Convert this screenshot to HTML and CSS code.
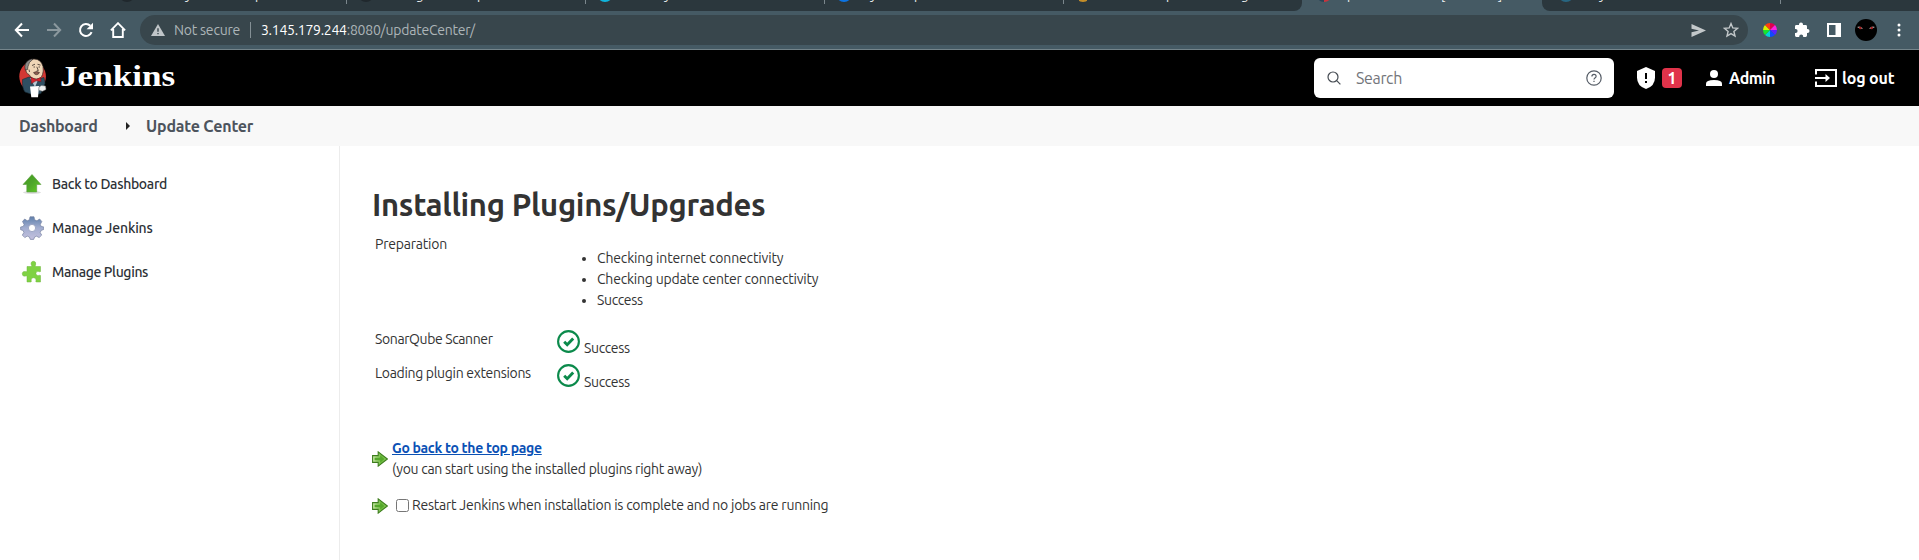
FILE: index.html
```
<!DOCTYPE html>
<html lang="en">
<head>
<meta charset="utf-8">
<title>Update Center [Jenkins]</title>
<link rel="stylesheet" href="styles.css">
</head>
<body>
<svg width="0" height="0" class="defs">
  <defs>
    <linearGradient id="green" x1="0" y1="0" x2="1" y2="1"><stop offset="0" stop-color="#3f9a1c"/><stop offset=".5" stop-color="#4ea62a"/><stop offset="1" stop-color="#62cf22"/></linearGradient>
    <linearGradient id="steel" x1="0" y1="0" x2="0" y2="1"><stop offset="0" stop-color="#5f80ac"/><stop offset=".5" stop-color="#a3aed0"/><stop offset="1" stop-color="#c3c0de"/></linearGradient>
    <linearGradient id="lime" x1="0" y1="0" x2="1" y2="0"><stop offset="0" stop-color="#d2ecb0"/><stop offset=".6" stop-color="#6cbc3c"/><stop offset="1" stop-color="#8fcb62"/></linearGradient>
    <symbol id="check" viewBox="0 0 23 23"><circle cx="11.5" cy="11.5" r="10.4" fill="none" stroke="#0b8a4b" stroke-width="2.1"/><path d="M7.2 11.7l3 3 6-6.3" fill="none" stroke="#0b8a4b" stroke-width="2.9"/></symbol>
    <symbol id="arrow" viewBox="0 0 16 16"><path d="M.6 4.6h5.6V.9L15.3 8l-9.1 7.1v-3.7H.6z" fill="url(#lime)" stroke="#3c7d1c" stroke-width="1.1"/><path d="M2.6 6.8h5.6V4.6L12.4 8l-4.2 3.4V9.300H2.6z" fill="#55a82b"/></symbol>
  </defs>
</svg>

<div class="tabstrip">
  <div class="tabs tabs-before">
    <div class="tab"><i class="fav dark"></i><b class="t1">y</b><b class="t2">p</b></div>
    <div class="tab"><i class="fav dark"></i><b class="t3">g</b><b class="t4">p</b></div>
    <div class="tab"><i class="fav cyan"></i><b class="t5">y</b></div>
    <div class="tab"><i class="fav blue"></i><b class="t6">y</b><b class="t7">p</b></div>
    <div class="tab last"><i class="fav amber"></i><b class="t8">p</b><b class="t9">g</b></div>
  </div>
  <div class="tab active"><i class="fav red"></i><b class="t10">p</b><b class="t11">[</b><b class="t12">]</b></div>
  <div class="tabs tabs-after"><div class="tab"><i class="fav teal"></i><b class="t13">y</b></div></div>
</div>

<div class="toolbar">
  <div class="nav">
    <svg width="16" height="16" viewBox="0 0 16 16" fill="none" stroke="#fff" stroke-width="2"><path d="M15 8H2M8 1.500L1.800 8 8 14.500"/></svg>
    <svg width="16" height="16" viewBox="0 0 16 16" fill="none" stroke="#8b989e" stroke-width="2"><path d="M1 8h13M8 1.500L14.200 8 8 14.500"/></svg>
    <svg width="16" height="16" viewBox="0 0 16 16"><path d="M13.600 10.200A6 6 0 1 1 12.300 3.800" fill="none" stroke="#fff" stroke-width="2"/><path d="M15 .8v6.400H8.600z" fill="#fff"/></svg>
    <svg width="16" height="16" viewBox="0 0 16 16"><path d="M.9 8.300L8 1.200l7.100 7.100M3.200 7v8h9.600V7" fill="none" stroke="#fff" stroke-width="1.900"/></svg>
  </div>
  <div class="omnibox">
    <svg class="warn" width="14" height="12" viewBox="0 0 14 12"><path d="M7 0l7 12H0z" fill="#c0c5c8"/><path d="M6.300 4.200h1.400v3.600H6.300zM6.300 8.900h1.400v1.400H6.300z" fill="#38464c"/></svg>
    <span class="insecure">Not secure</span>
    <span class="bar"></span>
    <span class="host">3.145.179.244</span><span class="path">:8080/updateCenter/</span>
    <svg class="send" width="15" height="13" viewBox="0 0 15 13"><path d="M.5 0L15 6.500.5 13V8.200L8 6.500.5 4.800z" fill="#c3c8ca"/></svg>
    <svg width="16" height="16" viewBox="0 0 16 16"><path d="M8 1.600l1.800 4.300 4.700.4-3.600 3.100 1.100 4.600L8 11.600 4 14l1.100-4.600-3.600-3.100 4.700-.4z" fill="none" stroke="#c3c8ca" stroke-width="1.400"/></svg>
  </div>
  <div class="ext">
    <svg width="16" height="16" viewBox="-8 -8 16 16">
      <path d="M0 0V-7A7 7 0 0 1 5 -5z" fill="#e0004c"/><path d="M0 0L5-5A7 7 0 0 1 7 0z" fill="#ff20e0"/><path d="M0 0H7A7 7 0 0 1 5 5z" fill="#5b20ff"/><path d="M0 0L5 5A7 7 0 0 1 0 7z" fill="#1048ff"/><path d="M0 0V7A7 7 0 0 1-5 5z" fill="#00d5d8"/><path d="M0 0L-5 5A7 7 0 0 1-7 0z" fill="#19e52c"/><path d="M0 0H-7A7 7 0 0 1-5-5z" fill="#d7f000"/><path d="M0 0L-5-5A7 7 0 0 1 0-7z" fill="#ff3b10"/>
    </svg>
    <svg width="16" height="16" viewBox="0 0 16 16"><path d="M1 4.400Q1 3 2.400 3H5V2.600a2 2 0 0 1 4 0V3h2.600Q13 3 13 4.400V7h.5a2 2 0 0 1 0 4H13v2.600Q13 15 11.600 15H9.200v-.5a2 2 0 0 0-4 0v.5H2.400Q1 15 1 13.600V11h.6a2 2 0 0 0 0-4H1z" fill="#fff"/></svg>
    <svg width="14" height="14" viewBox="0 0 14 14"><path d="M0 0h14v14H0zM2 2v10h6.500V2z" fill="#fff" fill-rule="evenodd"/></svg>
    <svg width="22" height="22" viewBox="0 0 22 22"><circle cx="11" cy="11" r="11"/><path d="M2 8q3-1.500 6 1.500-3 1-6-1.500zM20 8q-3-1.500-6 1.500 3 1 6-1.500z" fill="#a8a0a0"/><circle cx="5.300" cy="9" r="1.200" fill="#a51d1d"/><circle cx="16.700" cy="9" r="1.200" fill="#a51d1d"/></svg>
    <svg width="4" height="14" viewBox="0 0 4 14" fill="#fff"><circle cx="2" cy="2" r="1.500"/><circle cx="2" cy="7" r="1.500"/><circle cx="2" cy="12" r="1.500"/></svg>
  </div>
</div>

<header class="header">
  <svg class="mascot" width="28" height="40" viewBox="0 0 28 40">
    <ellipse cx="13.600" cy="18.500" rx="13.300" ry="15" fill="#d33833"/>
    <path d="M3.500 21.500L10 19l9 2 6-1.500 1 6-2 4-2 6-7 1.500-9-3Q3 30 3.500 21.500z" fill="#2f4f62" stroke="#172b36" stroke-width=".6"/>
    <path d="M11 20l5 9 3.500-8z" fill="#b9c9d4"/>
    <path d="M6.500 9Q8 1 15 1t9 7.500q.8 5-.5 8-1.500 4.500-6 4.500-5 0-7.500-4.500-3.500-1-3.500-7.500z" fill="#f0d6b7" stroke="#382d28" stroke-width=".7"/>
    <path d="M6.300 12Q4.500 5 10 2q2.500-1.300 4-.8Q9.500 4 9 8.500l-.5 3z" fill="#8c8a88" stroke="#292524" stroke-width=".6"/>
    <path d="M13 7.500l3-1.300M18.500 6.300l3 .8M14.500 9h1.500M19.500 9H21M17.800 8.800l1.500 3.700-1.700.5M10 11.500l.5 2.500" fill="none" stroke="#382d28" stroke-width=".8"/>
    <path d="M14.500 14.500q3.500-1.800 6 0-1 2.200-3 2.200t-3-2.200z" fill="#8e5e50" stroke="#2b211d" stroke-width=".5"/>
    <path d="M12 19.300l5 2.300 4.500-2 .6 4-5-.8-4.700 2.800z" fill="#d5222c" stroke="#721219" stroke-width=".5"/>
    <path d="M11 28.500l9-.5-1 11.300h-6.700z" fill="#fff"/>
    <path d="M20 29l2.500-1.500 4 .6.500 3.400-3.500 1.800-3.500-1z" fill="#eee" stroke="#777" stroke-width=".5"/>
  </svg>
  <span class="wordmark">Jenkins</span>
  <div class="search">
    <svg width="14" height="14" viewBox="0 0 14 14" fill="none" stroke="#454b52" stroke-width="1.200"><circle cx="6" cy="6" r="5"/><path d="M9.700 9.700l3.700 3.700"/></svg>
    <span class="placeholder">Search</span>
    <svg width="16" height="16" viewBox="0 0 16 16" fill="none" stroke="#555c66" stroke-width="1.200"><circle cx="8" cy="8" r="7.200"/><path d="M5.900 6.400q0-2.100 2.100-2.100t2.100 1.900q0 1.100-1.100 1.700-1 .6-1 1.700M8 10.700v1.300"/></svg>
  </div>
  <svg class="shield" width="20" height="22" viewBox="0 0 20 22"><path d="M10 0l9 4v6.500q0 8.500-9 11.500-9-3-9-11.500V4z" fill="#fff"/><path d="M9 6h2v6H9zM9 14h2v2H9z"/></svg>
  <span class="badge">1</span>
  <svg class="person" width="16" height="16" viewBox="0 0 16 16" fill="#fff"><circle cx="8" cy="4" r="4"/><path d="M0 16v-2.500Q0 10 8 10t8 3.500V16z"/></svg>
  <span class="user">Admin</span>
  <svg class="exit" width="22" height="18" viewBox="0 0 22 18" fill="none" stroke="#fff" stroke-width="2"><path d="M1 5.500V1h20v16H1v-4.500M0 9h13"/><path d="M10.500 5l4.500 4-4.500 4z" fill="#fff" stroke="none"/></svg>
  <span class="logout">log out</span>
</header>

<nav class="crumbs"><span class="c1">Dashboard</span><svg width="4" height="8" viewBox="0 0 4 8"><path d="M0 0l4 4-4 4z" fill="#222"/></svg><span class="c2">Update Center</span></nav>

<div class="page">
  <aside class="side">
    <a class="task"><svg width="24" height="24" viewBox="0 0 24 24"><ellipse cx="12" cy="20.500" rx="9" ry="1.500" fill="#ddd"/><path d="M12 2.500l9 10h-4.300V20H6.800v-7.500H3z" fill="url(#green)" stroke="#5d9e40" stroke-width=".6"/></svg><span class="k1">Back to Dashboard</span></a>
    <a class="task"><svg width="24" height="24" viewBox="0 0 24 24"><path d="M10 .8h4l.6 3 2.300 1 2.700-1.800 2.200 2.500-1.500 2.900.8 2 2.600.5v2.600l-2.600.9-.9 2.200 1.500 2.500-2.600 2.500-2.500-1.400-2 .8-.9 2.400h-3.400l-.9-2.400-2.200-.9-2.400 1.500-2.500-2.500 1.600-2.500-.8-2.100-2.500-.8v-2.700l2.700-.6.8-2L2.500 5.500 4.700 3l2.500 1.800 2.200-1z" fill="url(#steel)" stroke="#7783a2" stroke-width=".7"/><circle cx="12" cy="12" r="3.600" fill="#fff" stroke="#909bbb" stroke-width=".8"/></svg><span class="k2">Manage Jenkins</span></a>
    <a class="task"><svg width="24" height="24" viewBox="0 0 24 24"><path d="M7 6.500h4.500q.6-.7-.2-1.500Q10.300 1.500 13.500 1.300 16.500 1.500 15.600 5q-.7.800 0 1.500h4.900v5q-.6.700-1.600 0-3-.7-3 2 .2 2.700 3 2 1-.6 1.600 0V22h-4.300q-.8-.6-.2-1.500.4-2.700-2.500-2.800-2.800.1-2.300 2.800.5.900-.2 1.500H7v-5.700q-.7-.8-1.600-.2-3 .7-3.200-2.300.2-2.900 3.200-2.300.9.600 1.600-.2z" fill="#7fd243" stroke="#6fb53c" stroke-width=".5"/></svg><span class="k3">Manage Plugins</span></a>
  </aside>
  <main class="main">
    <h1>Installing Plugins/Upgrades</h1>
    <div class="status">
      <div class="name n1">Preparation</div>
      <ul><li class="l1">Checking internet connectivity</li><li class="l2">Checking update center connectivity</li><li class="ok">Success</li></ul>
      <div class="name n2">SonarQube Scanner</div>
      <div class="result"><svg width="23" height="23"><use href="#check"/></svg><span class="ok">Success</span></div>
      <div class="name n3">Loading plugin extensions</div>
      <div class="result"><svg width="23" height="23"><use href="#check"/></svg><span class="ok">Success</span></div>
    </div>
    <div class="next">
      <svg width="16" height="16"><use href="#arrow"/></svg>
      <div class="nexttext"><a class="top">Go back to the top page</a><div class="note">(you can start using the installed plugins right away)</div></div>
    </div>
    <div class="next restart">
      <svg width="16" height="16"><use href="#arrow"/></svg>
      <input type="checkbox"><label>Restart Jenkins when installation is complete and no jobs are running</label>
    </div>
  </main>
</div>
</body>
</html>
```
FILE: styles.css
```
* { box-sizing: border-box; }
body { margin: 0; height: 560px; overflow: hidden; background: #fff; color: #333; font: 14px/21px Ubuntu, "Noto Sans", sans-serif; white-space: nowrap; }
svg { flex: none; display: block; }
.defs { position: absolute; }

.tabstrip { display: flex; height: 11px; background: #455a64; overflow: hidden; }
.tabs { display: flex; background: #2b373d; }
.tabs-before { width: 1302px; padding-left: 108px; border-radius: 0 0 8px 0; }
.tabs-after { flex: 1; border-radius: 0 0 0 8px; }
.tab { display: flex; width: 239px; height: 4px; padding-left: 11px; border-right: 1px solid #7b878d; overflow: hidden; }
.tab.last, .tab.active { border-right: 0; width: 238px; }
.tab.active { width: 240px; padding-left: 14px; }
.tabs-after .tab { padding-left: 16px; }
.tab b { width: 8px; margin-top: -13px; font-size: 13px; line-height: 16px; font-weight: 400; color: #f1f3f4; }
.fav { width: 16px; height: 16px; margin-top: -14px; border-radius: 50%; }
.dark { background: #20282d; }
.cyan { background: #10b4dc; }
.blue { background: #0c74e4; }
.amber { background: linear-gradient(90deg, transparent 25%, #c48d28 25%, #c48d28 75%, transparent 75%); }
.red { background: linear-gradient(90deg, #294457 50%, #c7343d 50%); }
.teal { background: #286681; }
.tab .t1 { margin-left: 50px; } .tab .t2 { margin-left: 62px; }
.tab .t3 { margin-left: 42px; } .tab .t4 { margin-left: 53px; }
.tab .t5 { margin-left: 51px; }
.tab .t6 { margin-left: 18px; } .tab .t7 { margin-left: 36px; }
.tab .t8 { margin-left: 75px; } .tab .t9 { margin-left: 67px; }
.tab .t10 { margin-left: 15px; } .tab .t11 { margin-left: 86px; } .tab .t12 { margin-left: 49px; }
.tab .t13 { margin-left: 25px; }

.toolbar { display: flex; align-items: center; height: 39px; padding: 0 18px 0 14px; background: #455a64; border-bottom: 1px solid #75858b; }
.nav { display: flex; gap: 16px; width: 126px; }
.omnibox { display: flex; align-items: center; width: 1608px; height: 30px; padding: 0 9px 0 11px; border-radius: 15px; background: #38464c; color: #adb5b8; font-size: 14px; }
.insecure { margin-left: 9px; width: 76px; letter-spacing: -.22px; }
.bar { width: 1px; height: 16px; margin-right: 10px; background: #849095; }
.host { color: #fff; letter-spacing: -.28px; }
.path { letter-spacing: -.22px; }
.send { margin: 0 17px 0 auto; }
.ext { display: flex; align-items: center; flex: 1; padding-left: 14px; gap: 0; }
.ext svg + svg { margin-left: 16px; }
.ext svg:nth-child(3) { margin-left: 17px; }
.ext svg:nth-child(4) { margin-left: 14px; }
.ext svg:nth-child(5) { margin-left: 20px; }
.ext svg:nth-child(2) { margin-left: 16px; }

.header { display: flex; align-items: center; height: 56px; padding: 0 22px 0 19px; background: #000; color: #fff; font-size: 16px; font-weight: 600; }
.wordmark { width: 120px; margin: -4px 0 0 13px; font: bold 30px/36px Georgia, "Liberation Serif", serif; transform: scaleX(1.17); transform-origin: 0 50%; }
.search { display: flex; align-items: center; width: 300px; height: 40px; margin-left: auto; padding: 0 12px 0 13px; border-radius: 6px; background: #fff; }
.placeholder { flex: 1; margin-left: 15px; color: #73757a; font-weight: 400; letter-spacing: -.35px; }
.shield { margin-left: 22px; }
.badge { width: 20px; height: 20px; margin-left: 6px; border-radius: 4px; background: #e0334a; line-height: 20px; text-align: center; }
.person { margin-left: 24px; }
.user { width: 86px; margin-left: 7px; letter-spacing: -.48px; }
.exit { margin: 0; }
.logout { width: 55px; margin-left: 5px; letter-spacing: -.15px; }

.crumbs { display: flex; align-items: center; height: 40px; padding-left: 19px; background: #f8f8f8; color: #4d545d; font-size: 16px; font-weight: 600; }
.c1 { width: 107px; letter-spacing: -.3px; }
.c2 { margin-left: 16px; letter-spacing: -.2px; }

.page { display: flex; height: 414px; }
.side { width: 340px; padding: 16px 0 0 20px; border-right: 1px solid #ececec; }
.task { display: flex; align-items: center; gap: 8px; height: 44px; font-weight: 500; color: #2d3136; }
.k1 { letter-spacing: -.32px; } .k2 { letter-spacing: -.15px; } .k3 { letter-spacing: -.36px; }

.main { padding: 39px 0 0 32px; }
h1 { margin: 0 0 9px; font-size: 31px; line-height: 40px; font-weight: 700; letter-spacing: -.3px; }
.status { display: grid; grid-template-columns: 185px auto; grid-template-rows: 95px 34px 34px; }
.name { padding-left: 3px; }
.n1 { letter-spacing: -.22px; } .n2 { letter-spacing: -.38px; } .n3 { letter-spacing: -.31px; }
.status ul { margin: 0; padding: 14px 0 0 40px; }
.l1 { letter-spacing: -.16px; } .l2 { letter-spacing: -.21px; } .ok { letter-spacing: -.35px; }
.result { display: flex; gap: 4px; padding-top: 1px; }
.result span { margin-top: 8px; }
.next { display: flex; align-items: center; gap: 4px; height: 42px; margin-top: 41px; }
.restart { height: 21px; margin-top: 15px; gap: 0; }
.top { color: #0b51b5; font-weight: 700; text-decoration: underline; letter-spacing: -.31px; }
.note { letter-spacing: -.265px; }
.next input { width: 13px; height: 13px; margin: 0 3px 0 8px; }
.next label { letter-spacing: -.24px; }
```
